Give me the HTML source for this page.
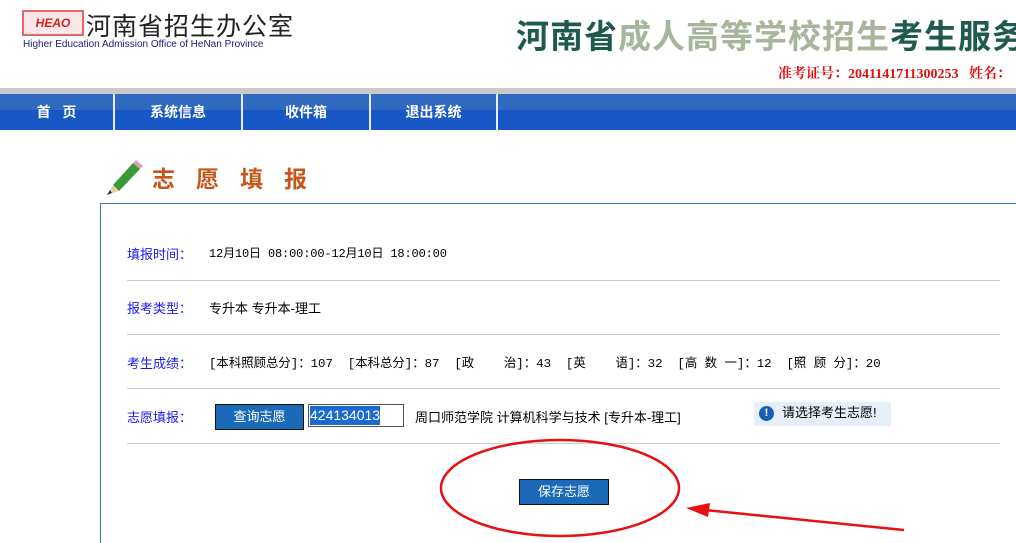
<!DOCTYPE html>
<html><head><meta charset="utf-8"><style>
*{margin:0;padding:0;box-sizing:border-box}
body{width:1016px;height:538px;overflow:hidden;background:#fff;position:relative;font-family:"Liberation Sans","Noto Sans CJK SC",sans-serif;font-size:13px;color:#000}
.a{position:absolute;white-space:nowrap}
.lbl{color:#1a1aee;font-size:13px}
.hr{position:absolute;left:127px;width:873px;height:1px;background:#ccc}
.nav{position:absolute;left:0;top:94px;width:1016px;height:36px;background:linear-gradient(#3069c0 0,#3069c0 45%,#1758c4 45%,#1758c4 100%)}
.nav div{position:absolute;top:0;height:36px;line-height:36px;color:#fff;font-weight:bold;font-size:14px;text-align:center;border-right:2px solid #e8eef8}
.btn{position:absolute;background:#1a6ab7;color:#fff;border:1px solid #111;text-align:center;font-size:13px}
</style></head><body>
<div class="a" style="left:22px;top:10px;width:62px;height:26px;border:2px solid #e06a6a;background:#fbe7e7;color:#c22;font-style:italic;font-weight:bold;font-size:12px;line-height:22px;text-align:center">HEAO</div>
<div class="a" style="left:86px;top:7px;font-size:25px;color:#222;letter-spacing:1px">河南省招生办公室</div>
<div class="a" style="left:23px;top:39px;font-size:10px;color:#1a1a7a">Higher Education Admission Office of HeNan Province</div>
<div class="a" style="left:516px;top:10px;font-size:33px;font-weight:bold;letter-spacing:1px"><span style="color:#1e5a4e">河南省</span><span style="color:#a7b59a">成人高等学校招生</span><span style="color:#1e5a4e">考生服务</span></div>
<div class="a" style="left:778px;top:63px;font-family:'Liberation Serif','Noto Serif CJK SC',serif;font-weight:bold;color:#e01010;font-size:14px">准考证号：2041141711300253&nbsp;&nbsp;&nbsp;姓名：</div>
<div class="a" style="left:0;top:88px;width:1016px;height:6px;background:#c9c9c9"></div>
<div class="nav">
<div style="left:0;width:115px">首&nbsp;&nbsp;&nbsp;页</div>
<div style="left:115px;width:128px">系统信息</div>
<div style="left:243px;width:128px">收件箱</div>
<div style="left:371px;width:127px">退出系统</div>
</div>
<svg class="a" style="left:103px;top:155px" width="40" height="40" viewBox="0 0 40 40"><path d="M10 30 L30 8 L37 14 L16 36 Z" fill="#3a9a3a"/><path d="M30 8 L33 5 L40 11 L37 14 Z" fill="#d9a0b0"/><path d="M10 30 L16 36 L4 40 Z" fill="#e8d0a0"/><path d="M4 40 L7 35 L9 38Z" fill="#333"/></svg>
<div class="a" style="left:152px;top:160px;font-size:23px;font-weight:bold;color:#c8561a;letter-spacing:21px">志愿填报</div>
<div class="a" style="left:100px;top:203px;width:940px;height:340px;border-left:1px solid #3a7ab8;border-top:1px solid #3a7ab8"></div>
<div class="a lbl" style="left:127px;top:244px">填报时间：</div>
<div class="a" style="left:209px;top:244px;font-family:'Liberation Mono','Noto Sans CJK SC',monospace;font-size:12px;letter-spacing:-0.15px">12月10日 08:00:00-12月10日 18:00:00</div>
<div class="hr" style="top:280px"></div>
<div class="a lbl" style="left:127px;top:298px">报考类型：</div>
<div class="a" style="left:209px;top:298px">专升本 专升本-理工</div>
<div class="hr" style="top:334px"></div>
<div class="a lbl" style="left:127px;top:353px">考生成绩：</div>
<div class="a" style="left:209px;top:353px;font-size:12.4px;font-family:'Liberation Mono','Noto Sans CJK SC',monospace">[本科照顾总分]：107&nbsp; [本科总分]：87&nbsp; [政&nbsp;&nbsp;&nbsp;&nbsp;治]：43&nbsp; [英&nbsp;&nbsp;&nbsp;&nbsp;语]：32&nbsp; [高 数 一]：12&nbsp; [照 顾 分]：20</div>
<div class="hr" style="top:388px"></div>
<div class="a lbl" style="left:127px;top:407px">志愿填报：</div>
<div class="btn" style="left:215px;top:404px;width:89px;height:26px;line-height:24px">查询志愿</div>
<div class="a" style="left:308px;top:404px;width:96px;height:23px;border:1px solid #555;padding:1px"><span style="background:#1a6ad0;color:#fff;font-size:14px;line-height:19px;display:inline-block">424134013</span></div>
<div class="a" style="left:415px;top:407px">周口师范学院 计算机科学与技术 [专升本-理工]</div>
<div class="a" style="left:754px;top:402px;width:137px;height:24px;background:#e6eefa;line-height:22px;padding-left:28px">请选择考生志愿!</div>
<div class="a" style="left:759px;top:406px;width:15px;height:15px;border-radius:50%;background:#1a5fb4;color:#fff;font-size:11px;font-weight:bold;text-align:center;line-height:15px">!</div>
<div class="hr" style="top:443px"></div>
<div class="btn" style="left:519px;top:479px;width:90px;height:26px;line-height:24px">保存志愿</div>
<svg class="a" style="left:0;top:0" width="1016" height="538"><ellipse cx="560" cy="488" rx="119" ry="48" fill="none" stroke="#e81010" stroke-width="2.5"/><line x1="904" y1="530" x2="705" y2="510" stroke="#e81010" stroke-width="2.5"/><path d="M686 508 L710 503 L708 517 Z" fill="#e81010"/></svg>
</body></html>
